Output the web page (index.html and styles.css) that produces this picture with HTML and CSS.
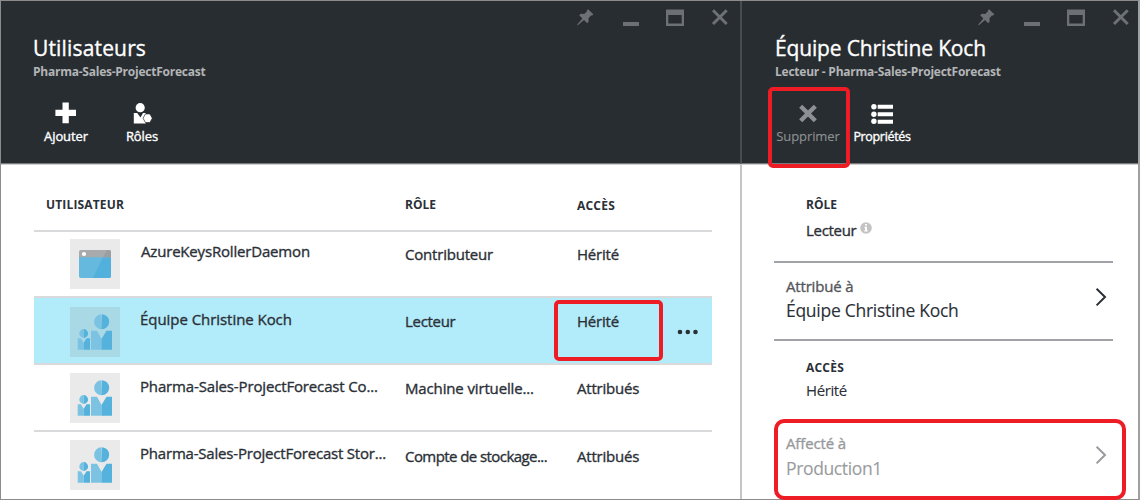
FILE: index.html
```html
<!DOCTYPE html>
<html lang="fr">
<head>
<meta charset="utf-8">
<title>Utilisateurs</title>
<link rel="stylesheet" href="styles.css">
</head>
<body>
<svg class="defs" width="0" height="0">
  <symbol id="pin" viewBox="0 0 18 18"><path d="M12.1 1.200l5.400 5.400-1.600.9-1-.1-2.400 2.900.1 3.400-1.400 1.500-3.200-3.100L2.100 16.900l-.9.3.3-.9 4.900-5.800-3.200-3.200L4.800 5.800l3.400.1 2.700-2.400-.1-1z"/></symbol>
  <symbol id="min" viewBox="0 0 18 18"><path d="M2 14h16v4H2z"/></symbol>
  <symbol id="max" viewBox="0 0 18 18"><path fill-rule="evenodd" d="M0 1.500h18V18H0zM2.300 7v8.600h13.400V7z"/></symbol>
  <symbol id="close" viewBox="0 0 18 18"><path d="M2 2.300L15.700 16M15.700 2.300L2 16" fill="none" stroke="currentColor" stroke-width="3"/></symbol>
  <symbol id="people" viewBox="0 0 50 50">
    <path fill="#7cc3e3" d="M31.600 7.200a7.500 7.500 0 1 0 0 15zM21 23.700h6L31.600 32v10.700H21zM13.700 22.100a4.400 4.400 0 1 0 0 8.800zM7.700 31.200h3.200l2.800 4.500v7H7.700z"/>
    <path fill="#54b2dc" d="M32 7.200a7.400 7.400 0 1 1-.6 15zM31.500 42.700V32l5-8.300H42v19zM13.700 22.100a4.400 4.400 0 0 1 0 8.800zM13.700 42.700v-7l2.800-4.500H20v11.500z"/>
  </symbol>
</svg>
<div class="frame">
  <section class="blade blade-users">
    <header class="head">
      <div class="controls">
        <svg><use href="#pin"/></svg><svg><use href="#min"/></svg><svg><use href="#max"/></svg><svg><use href="#close"/></svg>
      </div>
      <h1 class="title t-users">Utilisateurs</h1>
      <p class="sub">Pharma-Sales-ProjectForecast</p>
      <nav class="commands">
        <div class="cmd cmd-add">
          <svg viewBox="0 0 22 22"><path d="M7.500.5h6.300v7.200H21V14h-7.200v7.300H7.500V14H.4V7.700h7.100z"/></svg>
          <span>Ajouter</span>
        </div>
        <div class="cmd cmd-roles">
          <svg viewBox="0 0 22 22"><circle cx="9.200" cy="5.700" r="4.600"/><path d="M2.800 11h3.400l3.300 4.600 2.500-4.600h2.700v10.500H2.800z"/><path stroke="#282d31" stroke-width=".7" d="M14.500 11.900h4.400l2.400 4.300-2.400 4.400h-4.400l-2.500-4.400z"/></svg>
          <span>Rôles</span>
        </div>
      </nav>
    </header>
    <div class="table">
      <div class="thead"><b class="c-user">UTILISATEUR</b><b class="c-role">RÔLE</b><b class="c-acc">ACCÈS</b></div>
      <div class="row r1">
        <svg class="tile" viewBox="0 0 50 50"><path fill="#65b8de" d="M9 17h32v20a2 2 0 0 1-2 2H11a2 2 0 0 1-2-2z"/><path fill="#52b0dc" d="M33 18h8v19a2 2 0 0 1-2 2H23z"/><path fill="#a8aaac" d="M11 11h28a2 2 0 0 1 2 2v5.300H9V13a2 2 0 0 1 2-2z"/><path fill="#9c9fa1" d="M37 11h2a2 2 0 0 1 2 2v5.300h-8z"/><circle cx="14" cy="15" r="2.100" fill="#fff"/></svg>
        <span class="name n1">AzureKeysRollerDaemon</span><span class="role">Contributeur</span><span class="acc">Hérité</span>
      </div>
      <div class="row r2">
        <svg class="tile"><use href="#people"/></svg>
        <span class="name n2">Équipe Christine Koch</span><span class="role lect">Lecteur</span><span class="acc">Hérité</span>
        <svg class="more" viewBox="0 0 22 6"><circle cx="3" cy="3" r="2.300"/><circle cx="10.800" cy="3" r="2.300"/><circle cx="18.500" cy="3" r="2.300"/></svg>
        <i class="mark mark-access"></i>
      </div>
      <div class="row r3">
        <svg class="tile"><use href="#people"/></svg>
        <span class="name n3">Pharma-Sales-ProjectForecast Co...</span><span class="role r-vm">Machine virtuelle...</span><span class="acc">Attribués</span>
      </div>
      <div class="row r4">
        <svg class="tile"><use href="#people"/></svg>
        <span class="name n4">Pharma-Sales-ProjectForecast Stor...</span><span class="role r-st">Compte de stockage...</span><span class="acc">Attribués</span>
      </div>
    </div>
  </section>
  <section class="blade blade-team">
    <header class="head">
      <div class="controls">
        <svg><use href="#pin"/></svg><svg><use href="#min"/></svg><svg><use href="#max"/></svg><svg><use href="#close"/></svg>
      </div>
      <h1 class="title t-team">Équipe Christine Koch</h1>
      <p class="sub">Lecteur - Pharma-Sales-ProjectForecast</p>
      <nav class="commands">
        <div class="cmd cmd-del">
          <svg viewBox="0 0 22 22"><path d="M3.700 4.200L18.300 18.800M18.300 4.200L3.700 18.800" stroke="currentColor" stroke-width="4.400"/></svg>
          <span>Supprimer</span>
          <i class="mark mark-delete"></i>
        </div>
        <div class="cmd cmd-prop">
          <svg viewBox="0 0 22 22"><circle cx="2.900" cy="4.700" r="2.700"/><circle cx="2.900" cy="12.300" r="2.700"/><circle cx="2.900" cy="19.300" r="2.700"/><path d="M6.700 2.800H22v4H6.700zM6.700 10.200H22v4H6.700zM6.700 17.700H22v4H6.700z"/></svg>
          <span>Propriétés</span>
        </div>
      </nav>
    </header>
    <div class="details">
      <div class="field f-role"><b>RÔLE</b><div class="val lect">Lecteur<svg class="info" viewBox="0 0 12 12"><circle cx="6" cy="6" r="5.800" fill="#c3c3c3"/><path fill="#fff" d="M5 2h2v1.600H5zM4.300 4.700H7v3.900h.8v1H4.200v-1H5V5.700h-.7z"/></svg></div></div>
      <div class="link l-assigned"><div><p>Attribué à</p><p class="big">Équipe Christine Koch</p></div><svg class="chev" viewBox="0 0 12 20"><path d="M1.600 1.800L10 10l-8.400 8.400"/></svg></div>
      <div class="field f-access"><b class="c-acc">ACCÈS</b><div class="val light">Hérité</div></div>
      <div class="link l-scope"><div><p>Affecté à</p><p class="big">Production1</p></div><svg class="chev" viewBox="0 0 12 20"><path d="M1.600 1.800L10 10l-8.400 8.400"/></svg><i class="mark mark-scope"></i></div>
    </div>
  </section>
</div>
</body>
</html>
```
FILE: styles.css
```css
* { box-sizing: border-box; }
body, h1, p { margin: 0; font-weight: 400; }
body {
  width: 1140px;
  height: 500px;
  overflow: hidden;
  background: #fff;
  color: #2b3037;
  font: 15px/20px "Open Sans", "Noto Sans", sans-serif;
  -webkit-text-stroke: .35px currentColor;
  white-space: nowrap;
}
svg { display: block; fill: currentColor; flex: none; }
.defs { position: absolute; }
.frame {
  display: flex;
  width: 1140px;
  height: 500px;
  border: 1px solid #8c8c8c;
  border-right: 2px solid #a0a0a0;
}
.blade { display: flex; flex-direction: column; }
.blade-users { width: 739px; }
.blade-team { width: 398px; }

/* Dark title area */
.head {
  height: 163px;
  flex: none;
  background: #282d31;
  border-bottom: 1px solid #77797c;
  color: #fff;
}
.blade-team .head { border-left: 2px solid #474c50; }
.controls {
  display: flex;
  justify-content: flex-end;
  gap: 27px;
  height: 33px;
  padding: 7px 11px 0 0;
  color: #6d7175;
}
.blade-team .controls { padding-right: 8px; }
.controls svg { width: 18px; height: 18px; }
.title { padding-left: 32px; font-size: 21px; line-height: 28px; }
.t-users { letter-spacing: .16px; }
.t-team { letter-spacing: -.15px; }
.sub {
  margin-top: 2px;
  padding-left: 32px;
  color: #b3b5b7;
  font-size: 12px;
  font-weight: 700;
  line-height: 16px;
  letter-spacing: -.24px;
  -webkit-text-stroke-width: 0;
}
.commands { display: flex; padding-top: 22px; font-size: 13px; line-height: 18px; letter-spacing: -.1px; }
.cmd { display: flex; flex-direction: column; align-items: center; position: relative; width: 76px; }
.cmd svg { width: 22px; height: 22px; margin-bottom: 3px; }
.cmd-add { margin-left: 27px; }
.blade-team .title, .blade-team .sub { padding-left: 33px; }
.cmd-del { width: 80px; margin-left: 26px; color: #8e9194; -webkit-text-stroke-width: .1px; }
.cmd-prop { width: 68px; font-size: 12.5px; letter-spacing: -.33px; }
.cmd-prop svg { margin-bottom: 4px; }

/* User list */
b { font-size: 12px; font-weight: 700; line-height: 16px; -webkit-text-stroke-width: 0; }
.c-user { letter-spacing: .16px; }
.c-acc { letter-spacing: .22px; }
.table { flex: 1; min-height: 0; padding: 0 28px 0 33px; border-top: 1px solid #d0d1d2; }
.thead { display: grid; grid-template-columns: 359px 172px 1fr; height: 65px; padding: 32px 0 0 12px; }
.thead .c-acc { padding-top: 1px; }
.row {
  display: grid;
  grid-template-columns: 106px 265px 172px 100px auto;
  position: relative;
  align-items: start;
  height: 67px;
  padding-top: 8px;
  border-top: 2px solid #d9dadb;
}
.r1 { height: 66px; padding-top: 7px; }
.r2 { background: #b2ebf9; padding-top: 9px; }
.tile { width: 50px; height: 50px; margin-left: 36px; background: #eaeaea; }
.r2 .tile { background: #aad9e6; }
.name { margin-top: 3px; }
.r1 .name, .r2 .name { margin-top: 2px; }
.role, .acc { margin-top: 5px; letter-spacing: -.2px; }
.r2 .role, .r2 .acc { margin-top: 4px; }
.r4 .role, .r4 .acc { margin-top: 6px; }
.n1 { padding-left: 1px; letter-spacing: -.18px; }
.n2 { letter-spacing: -.05px; }
.n3 { letter-spacing: -.15px; }
.n4 { letter-spacing: -.2px; }
.lect, .role.lect { letter-spacing: -.3px; }
.role.r-vm { letter-spacing: -.14px; }
.role.r-st { letter-spacing: -.57px; }
.more { width: 22px; height: 6px; margin-top: 22px; }

/* Property panel */
.details { flex: 1; min-height: 0; border-left: 2px solid #c4c5c6; border-top: 1px solid #d0d1d2; padding: 0 25px 0 32px; }
.field { padding-left: 32px; }
.field b { display: block; }
.val { display: flex; }
.f-role { height: 96px; padding-top: 32px; }
.f-role .val { margin-top: 7px; }
.info { width: 12px; height: 12px; margin: 2px 0 0 4px; }
.light { margin-top: 4px; letter-spacing: -.4px; -webkit-text-stroke-width: .1px; }
.link {
  display: flex;
  position: relative;
  justify-content: space-between;
  height: 80px;
  padding: 13px 6px 0 12px;
  letter-spacing: -.18px;
}
.link p:first-child { color: #54575b; }
.link .big { font-size: 17.5px; line-height: 24px; letter-spacing: -.28px; margin-top: 2px; -webkit-text-stroke-width: .1px; }
.chev { width: 12px; height: 20px; margin-top: 11px; fill: none; stroke: currentColor; stroke-width: 2; }
.l-assigned { border-top: 2px solid #a0a4a8; border-bottom: 2px solid #a0a2a5; }
.f-access { height: 92px; padding-top: 19px; }
.l-scope { color: #999b9e; padding-top: 0; letter-spacing: -.13px; }
.l-scope .chev { margin-top: 12px; }
.link.l-scope p:first-child { color: #97999c; }
.l-scope .big { letter-spacing: -.36px; margin-top: 3px; }

/* Red callout outlines laid over the content */
.mark { position: absolute; border: 4px solid #ee1c25; border-radius: 5px; }
.mark-delete { left: 0; top: -15px; width: 82px; height: 81px; }
.mark-access { left: 520px; top: 2px; width: 109px; height: 61px; }
.mark-scope { left: 0; top: -14px; width: 352px; height: 81px; border-radius: 10px; }
```
